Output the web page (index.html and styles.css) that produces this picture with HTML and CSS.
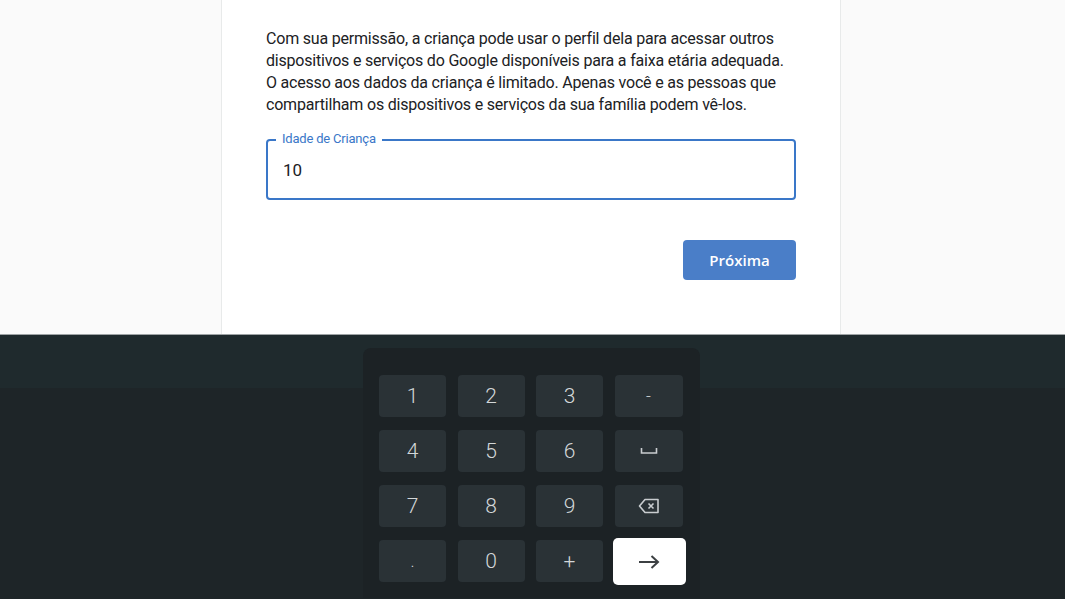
FILE: index.html
```html
<!DOCTYPE html>
<html lang="pt">
<head>
<meta charset="utf-8">
<link rel="stylesheet" href="styles.css">
</head>
<body>
<div class="top">
  <div class="side side-left"></div>
  <main class="card">
    <p class="desc">Com sua permissão, a criança pode usar o perfil dela para acessar outros dispositivos e serviços do Google disponíveis para a faixa etária adequada. O acesso aos dados da criança é limitado. Apenas você e as pessoas que compartilham os dispositivos e serviços da sua família podem vê-los.</p>
    <div class="field">
      <span class="label">Idade de Criança</span>
      <span class="value">10</span>
    </div>
    <div class="actions">
      <button class="btn">Próxima</button>
    </div>
  </main>
  <div class="side"></div>
</div>
<div class="bottom">
  <div class="keyboard">
    <div class="key">1</div>
    <div class="key">2</div>
    <div class="key">3</div>
    <div class="key small">-</div>
    <div class="key">4</div>
    <div class="key">5</div>
    <div class="key">6</div>
    <div class="key"><svg width="18" height="8" viewBox="0 0 18 8"><path d="M1.5 1v5h15V1" fill="none" stroke="#c9cdd0" stroke-width="1.6"/></svg></div>
    <div class="key">7</div>
    <div class="key">8</div>
    <div class="key">9</div>
    <div class="key"><svg width="22" height="16" viewBox="0 0 22 16"><path d="M7 1.5h13v13H7L1.5 8z" fill="none" stroke="#c9cdd0" stroke-width="1.6" stroke-linejoin="round"/><path d="M10.5 5.5l5 5M15.5 5.5l-5 5" stroke="#c9cdd0" stroke-width="1.6"/></svg></div>
    <div class="key small">.</div>
    <div class="key">0</div>
    <div class="key">+</div>
    <div class="key enter"><svg width="22" height="14" viewBox="0 0 22 14"><path d="M1 7h19M13.5 1l6.5 6-6.5 6" fill="none" stroke="#3c4043" stroke-width="2"/></svg></div>
  </div>
</div>
</body>
</html>
```

FILE: styles.css
```css
* { box-sizing: border-box; }
html, body { margin: 0; padding: 0; }
body {
  width: 1065px;
  height: 599px;
  overflow: hidden;
  font-family: Roboto, "Liberation Sans", sans-serif;
  background: #1e2528;
}
.top {
  display: flex;
  height: 335px;
  background: #fafafa;
  border-bottom: 1px solid #9ea3a5;
}
.side { flex: 1; }
.side-left { flex: 0 0 221px; }
.card {
  width: 620px;
  background: #ffffff;
  border-left: 1px solid #e8eaea;
  border-right: 1px solid #e8eaea;
  padding: 28px 44px 0 44px;
}
.desc {
  margin: 0;
  font-size: 16px;
  line-height: 22px;
  color: #202124;
  letter-spacing: -0.2px;
}
.field {
  position: relative;
  margin-top: 23px;
  height: 61px;
  border: 2px solid #3a77c8;
  border-radius: 4px;
  display: flex;
  align-items: center;
  padding-left: 15px;
}
.label {
  position: absolute;
  top: -9px;
  left: 8px;
  padding: 0 6px;
  background: #ffffff;
  font-size: 13px;
  line-height: 14px;
  color: #3a77c8;
  letter-spacing: -0.2px;
}
.value {
  font-size: 17px;
  color: #202124;
}
.actions {
  display: flex;
  justify-content: flex-end;
  margin-top: 40px;
}
.btn {
  width: 113px;
  height: 40px;
  border: none;
  border-radius: 4px;
  background: #4a7ec8;
  color: #ffffff;
  font-family: "Open Sans", Roboto, sans-serif;
  font-weight: 600;
  font-size: 15px;
  padding: 0;
}
.bottom {
  height: 263px;
  display: flex;
  justify-content: center;
  background: linear-gradient(#1f2a2d 0, #1f2a2d 53px, #1e2528 53px);
  padding-top: 13px;
}
.keyboard {
  width: 337px;
  margin-right: 2px;
  background: #1c2225;
  border-radius: 8px 8px 0 0;
  padding: 27px 16px 0 16px;
  display: grid;
  grid-template-columns: 67px 67px 67px 68px;
  grid-auto-rows: 42px;
  column-gap: 11.5px;
  row-gap: 13px;
  align-content: start;
}
.key {
  background: #2a3236;
  border-radius: 4px;
  display: flex;
  align-items: center;
  justify-content: center;
  color: #d3d7d9;
  font-size: 21px;
  font-weight: 300;
}
.key.small { font-size: 17px; }
.key.enter {
  background: #ffffff;
  margin: -2px -3px -3px -2px;
  border-radius: 5px;
}
```
